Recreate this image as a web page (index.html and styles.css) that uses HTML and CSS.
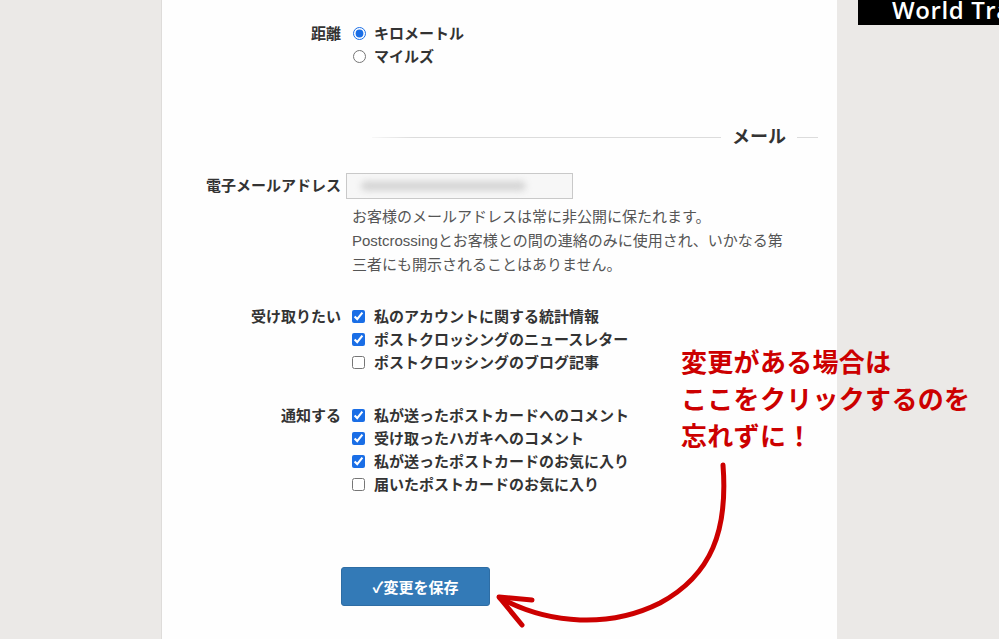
FILE: index.html
```html
<!DOCTYPE html>
<html lang="ja">
<head>
<meta charset="utf-8">
<title>設定</title>
<link rel="stylesheet" href="styles.css">
</head>
<body>
<div class="page">
  <main class="panel">
    <form class="settings">
      <div class="field">
        <span class="label">距離</span>
        <div class="options">
          <label class="option"><input type="radio" name="unit" checked>キロメートル</label>
          <label class="option"><input type="radio" name="unit">マイルズ</label>
        </div>
      </div>

      <h2 class="section-title"><span class="rule rule-long"></span><span class="title-text">メール</span><span class="rule rule-short"></span></h2>

      <div class="field field-email">
        <span class="label label-email">電子メールアドレス</span>
        <div class="email-box">
          <div class="email-input"><span class="email-value"></span></div>
          <p class="help">お客様のメールアドレスは常に非公開に保たれます。Postcrossingとお客様との間の連絡のみに使用され、いかなる第三者にも開示されることはありません。</p>
        </div>
      </div>

      <div class="field field-receive">
        <span class="label">受け取りたい</span>
        <div class="options">
          <label class="option"><input type="checkbox" checked>私のアカウントに関する統計情報</label>
          <label class="option"><input type="checkbox" checked>ポストクロッシングのニュースレター</label>
          <label class="option"><input type="checkbox">ポストクロッシングのブログ記事</label>
        </div>
      </div>

      <div class="field field-notify">
        <span class="label">通知する</span>
        <div class="options">
          <label class="option"><input type="checkbox" checked>私が送ったポストカードへのコメント</label>
          <label class="option"><input type="checkbox" checked>受け取ったハガキへのコメント</label>
          <label class="option"><input type="checkbox" checked>私が送ったポストカードのお気に入り</label>
          <label class="option"><input type="checkbox">届いたポストカードのお気に入り</label>
        </div>
      </div>

      <div class="actions">
        <button type="button" class="save">✓変更を保存</button>
      </div>
    </form>
  </main>
  <aside class="side">
    <div class="brand">World Tra</div>
  </aside>

  <div class="note">変更がある場合は<br>ここをクリックするのを<br>忘れずに！</div>
  <svg class="arrow" width="999" height="639" viewBox="0 0 999 639" aria-hidden="true">
    <path d="M723 465 C728 530 712 575 660 603 C610 628 550 625 500 598" fill="none" stroke="#cc0000" stroke-width="5" stroke-linecap="round"/>
    <path d="M532 600 L499 597 L522 625" fill="none" stroke="#cc0000" stroke-width="5" stroke-linecap="round" stroke-linejoin="round"/>
  </svg>
</div>
</body>
</html>
```

FILE: styles.css
```css
html, body {
  margin: 0;
  padding: 0;
  height: 100%;
  overflow: hidden;
}

body {
  background: #ebe9e7;
  font-family: "Liberation Sans", "Noto Sans CJK JP", Arial, sans-serif;
  color: #333;
}

.page {
  position: relative;
  display: flex;
  height: 639px;
  padding-left: 161px;
}

.panel {
  width: 675px;
  background: #fefefe;
  border-left: 1px solid #dedcda;
}

.settings {
  padding-top: 22px;
}

.field {
  display: grid;
  grid-template-columns: 179px 1fr;
  column-gap: 11px;
  font-size: 15px;
  line-height: 23px;
}

.label {
  text-align: right;
  font-weight: bold;
  color: #333;
}

.options {
  display: flex;
  flex-direction: column;
}

.option {
  display: flex;
  align-items: center;
  font-weight: bold;
  color: #333;
}

.option input {
  width: 13px;
  height: 13px;
  margin: 0 9px 0 0;
  accent-color: #1a6ee6;
}

.option input[type="radio"] {
  margin-left: 1px;
  margin-right: 8px;
}

.section-title {
  display: flex;
  align-items: center;
  margin: 55px 19px 0 210px;
  height: 28px;
  font-size: 18px;
  line-height: 28px;
  font-weight: bold;
  color: #333;
}

.rule {
  height: 1px;
  background: #dcdcdc;
}

.rule-long {
  flex: 1;
  background: linear-gradient(to right, rgba(220, 220, 220, 0.2), #dcdcdc 12%);
}

.rule-short {
  width: 21px;
}

.title-text {
  padding: 0 11px;
}

.field-email {
  margin-top: 22px;
}

.label-email {
  padding-top: 1px;
}

.email-input {
  box-sizing: content-box;
  width: 211px;
  height: 24px;
  margin-left: -6px;
  padding-left: 14px;
  border: 1px solid #c9c9c9;
  background: #f7f7f7;
  display: flex;
  align-items: center;
}

.email-value {
  display: block;
  width: 165px;
  height: 10px;
  border-radius: 5px;
  background: #d6d6d6;
  filter: blur(3px);
}

.help {
  margin: 6px 0 0;
  max-width: 438px;
  font-size: 15px;
  line-height: 24px;
  color: #555;
}

.field-receive {
  margin-top: 28px;
}

.field-notify {
  margin-top: 30px;
}

.actions {
  margin-top: 71px;
  padding-left: 179px;
}

.save {
  width: 149px;
  height: 39px;
  border: 1px solid #2e6da4;
  border-radius: 3px;
  background: #337ab7;
  color: #fff;
  font-family: "Liberation Sans", "Noto Sans CJK JP", sans-serif;
  font-size: 15px;
  font-weight: bold;
  cursor: pointer;
}

.side {
  flex: 1;
  padding-left: 21px;
  overflow: hidden;
}

/* site name bar, running off the right edge of the window */
.brand {
  height: 25px;
  background: #000;
  color: #fff;
  font-family: "Open Sans", "DejaVu Sans", sans-serif;
  font-weight: 600;
  font-size: 24px;
  line-height: 20px;
  padding-left: 34px;
  white-space: nowrap;
  overflow: hidden;
  letter-spacing: 0.6px;
}

.note {
  position: absolute;
  left: 681px;
  top: 342px;
  font-family: "Noto Sans CJK JP", sans-serif;
  font-size: 26px;
  line-height: 37px;
  font-weight: bold;
  color: #cc0000;
  letter-spacing: 0.3px;
}

.arrow {
  position: absolute;
  left: 0;
  top: 0;
  pointer-events: none;
}
```
